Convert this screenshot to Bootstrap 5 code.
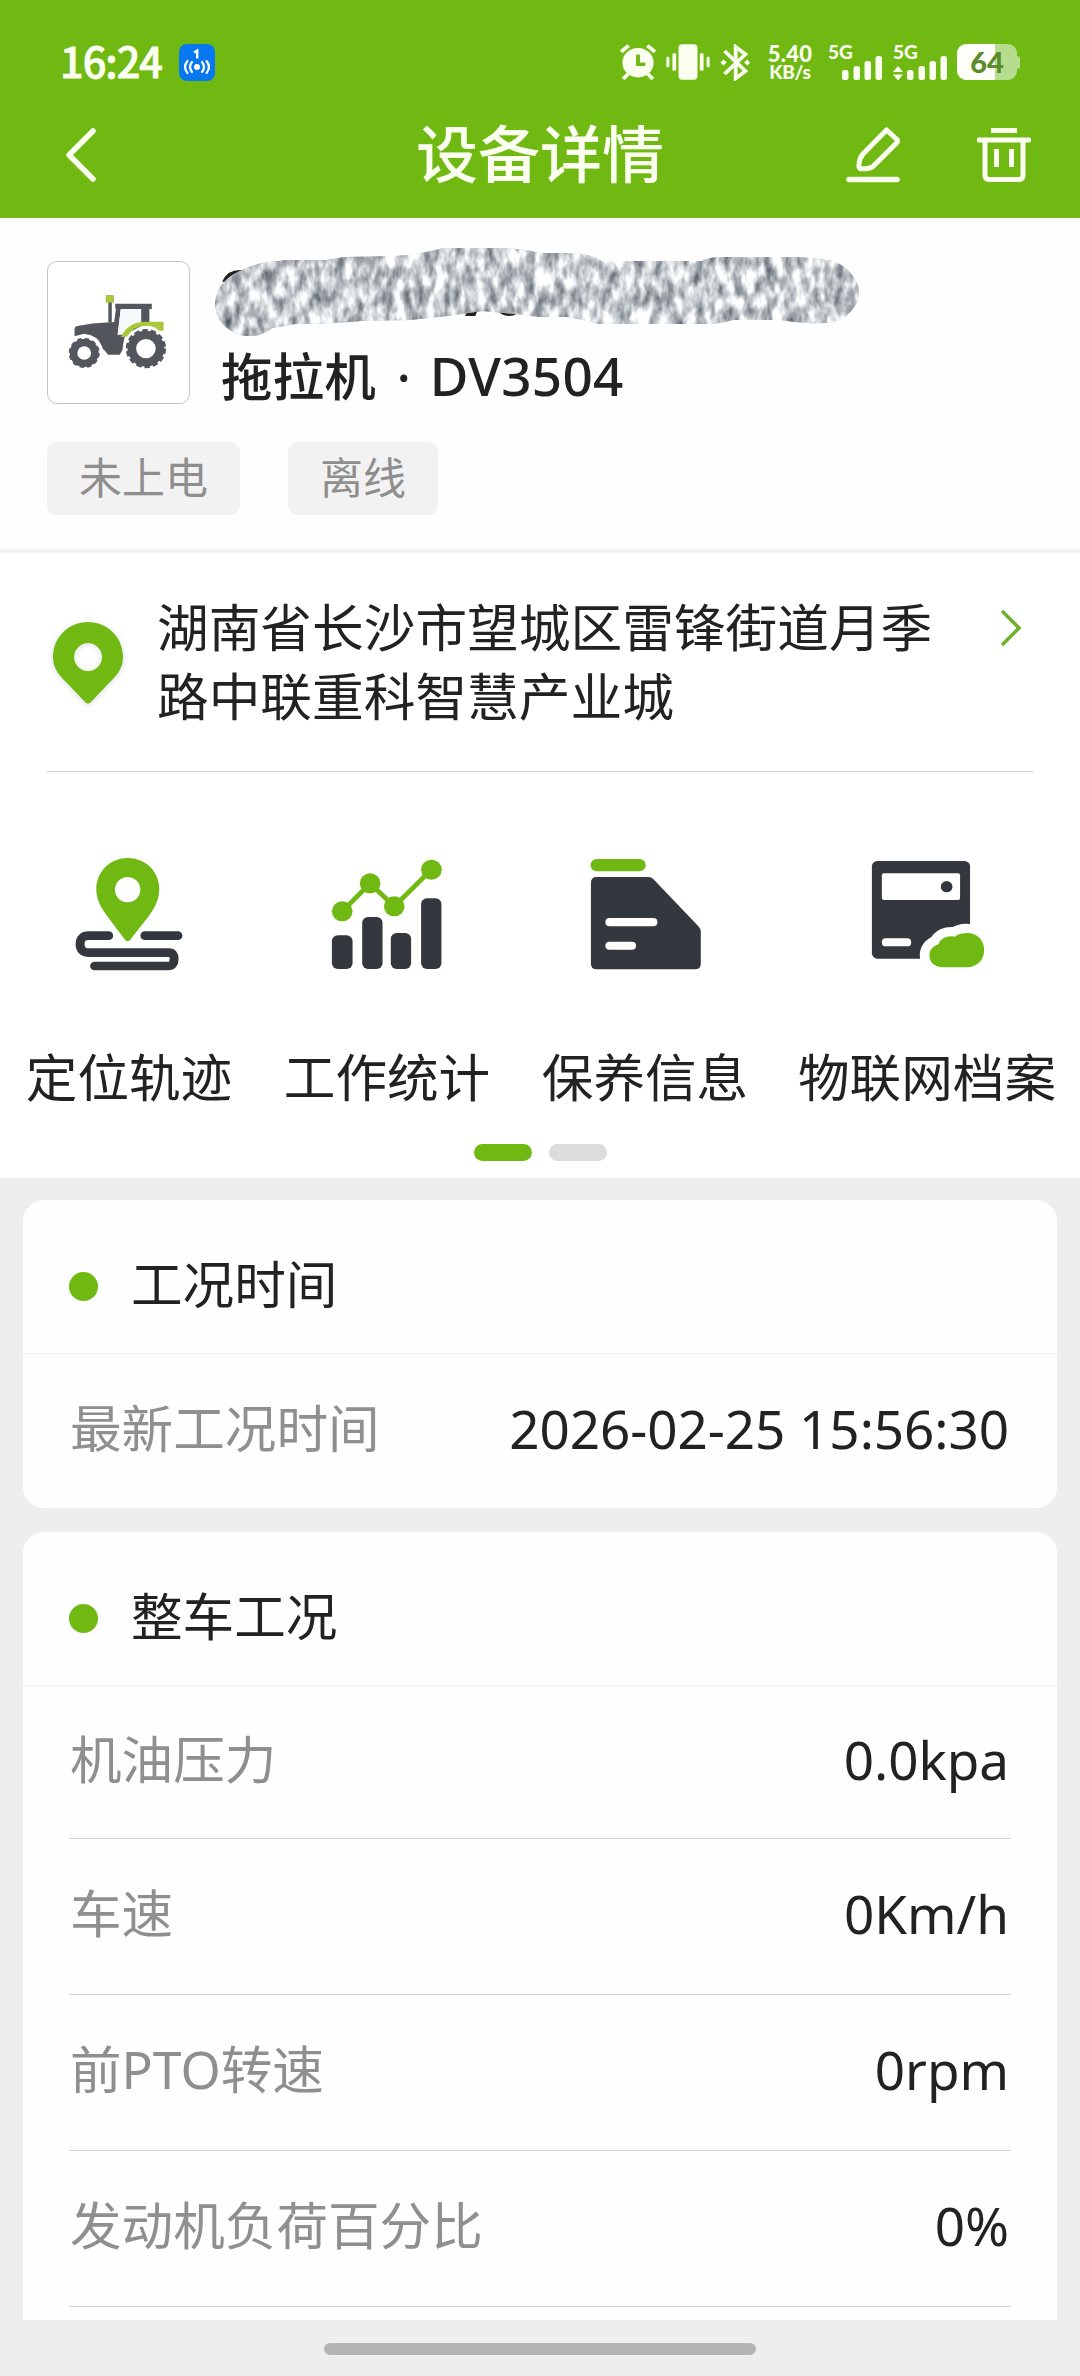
<!DOCTYPE html>
<html lang="zh-CN">
<head>
<meta charset="utf-8">
<meta name="viewport" content="width=device-width, initial-scale=1">
<title>设备详情</title>
<link rel="stylesheet" href="https://cdn.jsdelivr.net/npm/bootstrap@5.3.0/dist/css/bootstrap.min.css">
<style>
:root{--leaf:#70b913;--ink:#222;--soft:#8f8f8f;--slate:#34373d}
body{font-family:"Noto Sans","Noto Sans CJK SC",sans-serif;color:var(--ink);background:#eee;font-size:51.6px;line-height:1.35}
.screen{width:1080px;height:2376px;overflow:hidden}
svg{display:block;flex:none}
.topbar{background:var(--leaf);height:218px;color:#fbfff0}
.statusbar{height:92px;padding:32px 60px 0}
.clock{font:500 41.5px/54px "Noto Sans CJK SC",sans-serif;letter-spacing:-1px;-webkit-text-stroke:.8px;margin-bottom:4px}
.tiny{font-family:Lato,sans-serif;font-weight:900;line-height:1}
.rate{width:46px;font-size:22px;letter-spacing:.2px}
.rate span{display:block;line-height:19px}
.rate span+span{font-size:19px;line-height:17px;letter-spacing:-.2px}
.sig{height:36px;position:relative}
.sig b{font-size:19px;position:absolute;left:-14px;top:-2px}
.batt{width:60px;height:36px;border-radius:9px;background:linear-gradient(90deg,#fdfff8 63%,#b5dd8d 63%);color:#5c8a2c;font-size:29px;line-height:36px;text-align:center}
.nub{width:3px;height:13px;background:#b5dd8d;border-radius:0 3px 3px 0}
.navrow{height:126px;padding:0 49px 0 66px}
.pagename{font-family:"Noto Sans CJK SC",sans-serif;font-weight:500;font-size:62px;line-height:118px;padding-bottom:8px}
.side{width:280px;flex:none}
.thumb{width:143px;height:143px;border:1.5px solid #c4c4c6;border-radius:10px;margin-top:13px;background:#fff}
.device{padding:30px 0 31px 47px;background:#fefefe;height:331px}
.model{height:78px;font-weight:500;line-height:75px;white-space:pre}
.model .cj{font-family:"Noto Sans CJK SC"}
.tagbox{height:73px;border-radius:9px;background:#f2f2f2;color:#8e8e8e;font-size:43px;line-height:71px;padding:0 32px}
.rule-soft{height:4px;background:#f3f3f3}
.addr{height:218px;padding:40px 47px 0 53px}
.addr p{width:790px;line-height:69px;margin:0 0 0 34px;font-size:51.7px}
.thin{height:1px;background:#d4d4d4;margin:0 47px}
.menu{height:406px;padding-top:85px}
.tile{width:258px}
.tile-label{line-height:70px;margin-top:71px;white-space:nowrap}
.pg{width:58px;height:17px;border-radius:9px;background:#dcdcdc}
.panel{width:1034px;border:0;border-radius:21px;background:#fefefe;margin:0 auto}
.panel-top{height:154px;flex:none;padding-left:46px;border-bottom:1px solid #ececec}
.dot{width:29px;height:29px;border-radius:50%;background:var(--leaf);margin-right:33px}
.line-row{height:156px;margin:0 46px;border-bottom:1px solid #d2d2d2;padding:0 2px 5px 1px}
.line-row span:first-child{color:var(--soft)}
.val{font-size:53px;letter-spacing:-.05px}
.home{width:432px;height:12px;border-radius:6px;background:#b5b5b5;margin:23px auto 0}
.feed{height:1142px;flex:none;padding-top:22px}
</style>
</head>
<body>
<div class="screen d-flex flex-column">
  <header class="topbar">
    <div class="statusbar d-flex align-items-center">
      <span class="clock">16:24</span>
      <svg style="margin-left:17px" width="36" height="37" viewBox="0 0 36 37"><rect width="36" height="37" rx="8" fill="#0878f0"/><path d="M15 8.500l3.200-2v8" fill="none" stroke="#fff" stroke-width="2.300"/><circle cx="18" cy="23" r="3" fill="#fff"/><g fill="none" stroke="#fff" stroke-width="2.200" stroke-linecap="round"><path d="M13 18q-4 5 0 10M23 18q4 5 0 10M8.500 17q-5 6 0 12M27.500 17q5 6 0 12"/></g></svg>
      <div class="d-flex ms-auto align-items-center">
        <svg width="36" height="36" viewBox="232 131 104 110" preserveAspectRatio="none"><g stroke="#fbfff0" stroke-width="11" fill="none"><path d="M235 155l22-19M333 155l-22-19M258 220l-17 18M310 220l17 18"/></g><circle cx="284" cy="188" r="45" fill="#fbfff0"/><path d="M284 163v30h21" fill="none" stroke="#70b913" stroke-width="11"/></svg>
        <svg style="margin-left:10px" width="44" height="36" viewBox="365 131 130 110" preserveAspectRatio="none" fill="#fbfff0"><rect x="402" y="132" width="56" height="108" rx="11"/><rect x="384" y="159" width="11" height="54" rx="4"/><rect x="465" y="159" width="11" height="54" rx="4"/><rect x="366" y="170" width="9" height="32" rx="4"/><rect x="485" y="170" width="9" height="32" rx="4"/></svg>
        <svg style="margin-left:10px" width="31" height="37" viewBox="523 130 89 112" preserveAspectRatio="none"><path d="M536 151l60 61-28 22V139l28 22-60 60" fill="none" stroke="#fbfff0" stroke-width="11"/><path d="M524 186l9-9 9 9-9 9zM592 186l9-9 9 9-9 9z" fill="#fbfff0"/></svg>
        <div class="tiny rate text-center" style="margin-left:16px"><span>5.40</span><span>KB/s</span></div>
        <div class="sig tiny" style="margin-left:29px;width:40px"><b>5G</b><svg width="40" height="36" viewBox="14 0 40 36" fill="#fbfff0"><rect x="14" y="26" width="6.500" height="10" rx="2.500"/><rect x="25.500" y="22" width="6.500" height="14" rx="2.500"/><rect x="36.500" y="17" width="6.500" height="19" rx="2.500"/><rect x="47.500" y="12" width="6.500" height="24" rx="2.500"/></svg></div>
        <div class="sig tiny" style="margin-left:25px;width:40px"><b>5G</b><svg style="margin-left:-14px" width="54" height="36" viewBox="0 0 54 36" fill="#fbfff0"><path d="M0 28l5-6 5 6zM0 30.500l5 6 5-6z"/><rect x="14" y="26" width="6.500" height="10" rx="2.500"/><rect x="25.500" y="22" width="6.500" height="14" rx="2.500"/><rect x="36.500" y="17" width="6.500" height="19" rx="2.500"/><rect x="47.500" y="12" width="6.500" height="24" rx="2.500"/></svg></div>
        <div class="batt tiny" style="margin-left:10px">64</div><i class="nub"></i>
      </div>
    </div>
    <nav class="navrow d-flex align-items-center">
      <div class="side"><svg width="30" height="54" viewBox="0 0 30 54"><path d="M27 3L3 27 27 51" fill="none" stroke="#fbfff0" stroke-width="5.500" stroke-linecap="round" stroke-linejoin="round"/></svg></div>
      <div class="flex-fill text-center pagename" style="margin-left:-17px">设备详情</div>
      <div class="side d-flex justify-content-end">
        <svg width="54" height="56" viewBox="0 0 54 56" fill="none" stroke="#fbfff0" stroke-width="5" stroke-linejoin="round"><path d="M40.500 3L51 12.500Q52 14 51 15.500L27 39.500Q24 42 14.500 41.800 12.500 41 13 37 13.500 31 17 27Z"/><path d="M3 52.500H51" stroke-width="5.500" stroke-linecap="round"/></svg>
        <svg style="margin-left:77px" width="54" height="56" viewBox="0 0 54 56" fill="none" stroke="#fbfff0" stroke-width="5"><path d="M14 3.500H40" /><path d="M2 13H52" stroke-linecap="round"/><path d="M8 13V48Q8 52.500 12 52.500H42Q46 52.500 46 48V13"/><path d="M19.500 22V40M34.500 22V40"/></svg>
      </div>
    </nav>
  </header>

  <main class="bg-white">
    <section class="device">
      <div class="d-flex">
        <div class="thumb">
          <svg width="140" height="140" viewBox="141 128 406 417" preserveAspectRatio="none">
            <path d="M309 228h22v20h-5v60h-10v-60h-7z" fill="#54565e"/><rect x="309" y="228" width="22" height="21" fill="#a9c93b"/>
            <path fill="#54565e" fill-rule="evenodd" d="M218 349V328Q218 321 226 319L270 311 333 307 338 268 336 266V252H442V268H435V307L352 350H364Q358 370 357 390L349 404H315L306 392Q298 388 298 380 286 346 245 342ZM352 268L343 345 362 343 411 307V268Z"/>
            <path d="M352 268L343 345 362 343 411 307V268Z" fill="#f7fafb"/>
            <path d="M353 350Q376 305 424 306H476V333H463Q450 318 424 318 390 318 370 351Z" fill="#a9c93b"/>
            <circle cx="246" cy="399" r="31" fill="#fff" stroke="#54565e" stroke-width="22"/><circle cx="246" cy="399" r="42" fill="none" stroke="#54565e" stroke-width="6" stroke-dasharray="13 9"/>
            <circle cx="425" cy="386" r="41" fill="#fff" stroke="#54565e" stroke-width="25"/><circle cx="425" cy="386" r="55" fill="none" stroke="#54565e" stroke-width="7" stroke-dasharray="16 8.700"/>
          </svg>
        </div>
        <div style="margin-left:31px">
          <svg style="margin-left:-6px" width="644" height="88" viewBox="0 0 644 88">
            <defs><filter id="speckle" x="0" y="0" width="100%" height="100%" color-interpolation-filters="sRGB"><feTurbulence type="fractalNoise" baseFrequency="0.1 0.05" numOctaves="3" seed="8"/><feColorMatrix values="1.150 .1 0 0 .15  1.120 .1 0 0 .185  1.060 .1 0 0 .23  0 0 0 0 1"/></filter>
            <clipPath id="smear"><path d="M0 55Q1 45 5 39 12 29 23 24 34 18 47 15L71 12H112L129 9 181 8Q200 7 229 0H267Q300 -1 325 5H360Q375 6 387 13H487Q495 9 504 9H583Q600 10 618 13 631 18 637 27 644 35 644 44 644 54 637 62 630 71 618 74 606 76 594 75 580 75 566 72H518Q505 76 490 76H384Q370 72 353 69H325L301 66 267 63 233 68 195 72 147 73 122 75 81 76 57 80Q50 86 40 88 30 89 23 86 12 82 7 75 0 66 0 55Z"/></clipPath></defs>
            <path d="M9 34Q14 23 27 24M253 66l3-8h6l-3 8zM284 62q9 7 17 2" fill="none" stroke="#222" stroke-width="4"/>
            <g clip-path="url(#smear)"><rect width="644" height="88" fill="#c5cace"/><rect width="644" height="88" filter="url(#speckle)"/></g>
          </svg>
          <div class="model"><span class="cj">拖拉机</span><span style="margin:0 19px 0 21px">·</span><span style="font-size:53px;letter-spacing:.3px">DV3504</span></div>
        </div>
      </div>
      <div class="d-flex" style="gap:48px;margin-top:28px"><div class="tagbox">未上电</div><div class="tagbox">离线</div></div>
    </section>
    <div class="rule-soft"></div>
    <section class="addr d-flex align-items-start">
      <svg style="margin-top:29px;filter:drop-shadow(0 1px 3px #0002)" width="70" height="82" viewBox="0 0 70 82"><path fill="#70b913" fill-rule="evenodd" d="M35 0C54 0 70 15 70 35 70 48 62 55 56 61L38 80Q35 83 32 80L14 61C8 55 0 48 0 35 0 15 16 0 35 0ZM35 21a14 14 0 1 0 .1 0Z"/></svg>
      <p>湖南省长沙市望城区雷锋街道月季路中联重科智慧产业城</p>
      <svg class="ms-auto" style="margin-top:17px;margin-right:11px" width="22" height="36" viewBox="0 0 22 36"><path d="M2 1L19 18 2 35" fill="none" stroke="#70b030" stroke-width="3.500"/></svg>
    </section>
    <div class="thin"></div>
    <section class="menu">
      <div class="d-flex">
        <div class="tile d-flex flex-column align-items-center"><svg width="124" height="114" viewBox="194 110 360 342" preserveAspectRatio="none"><path d="M315 346H258Q232 346 232 371 232 397 258 397H490Q505 397 505 416 505 437 487 437H274M420 346H516" fill="none" stroke="#34373d" stroke-width="26" stroke-linecap="round"/><path fill="#70b913" fill-rule="evenodd" d="M370 113C423 113 462 154 462 207 462 242 444 270 430 289L377 359Q370 367 363 359L312 289C296 266 279 242 279 207 279 154 319 113 370 113ZM370 170a37 38 0 1 0 .1 0Z"/></svg><span class="tile-label">定位轨迹</span></div>
        <div class="tile d-flex flex-column align-items-center"><svg width="124" height="114" viewBox="944 110 360 342" preserveAspectRatio="none"><g fill="#34373d"><rect x="964" y="345" width="60" height="101" rx="17"/><rect x="1052" y="290" width="59" height="156" rx="17"/><rect x="1135" y="338" width="59" height="108" rx="17"/><rect x="1223" y="234" width="59" height="212" rx="17"/></g><path d="M994 273L1075 189 1145 258 1253 148" fill="none" stroke="#70b913" stroke-width="14"/><g fill="#70b913"><circle cx="994" cy="273" r="30"/><circle cx="1075" cy="189" r="30"/><circle cx="1145" cy="258" r="30"/><circle cx="1253" cy="148" r="30"/></g></svg><span class="tile-label">工作统计</span></div>
        <div class="tile d-flex flex-column align-items-center"><svg width="124" height="114" viewBox="125 110 360 342" preserveAspectRatio="none"><rect x="147" y="116" width="160" height="37" rx="18" fill="#70b913"/><path fill="#34373d" d="M165 170H315Q323 170 329 176L460 318Q467 325 467 334V430Q467 447 450 447H165Q148 447 148 430V187Q148 170 165 170Z"/><g fill="#fff"><rect x="190" y="293" width="151" height="25" rx="12"/><rect x="190" y="364" width="89" height="24" rx="12"/></g></svg><span class="tile-label">保养信息</span></div>
        <div class="flex-fill d-flex flex-column align-items-center"><svg width="124" height="114" viewBox="944 110 360 342" preserveAspectRatio="none"><rect x="964" y="122" width="285" height="293" rx="16" fill="#34373d"/><rect x="993" y="159" width="227" height="80" rx="6" fill="#fff"/><circle cx="1181" cy="199" r="17" fill="#34373d"/><rect x="993" y="354" width="85" height="24" rx="11" fill="#fff"/><path d="M1169 441C1145 440 1131 425 1131 405 1131 388 1142 377 1157 372 1164 354 1182 345 1205 349 1216 340 1228 338 1240 338 1270 338 1290 360 1290 389 1290 418 1270 440 1241 441Z" fill="#70b913" stroke="#fefefe" stroke-width="56" paint-order="stroke" stroke-linejoin="round"/></svg><span class="tile-label">物联网档案</span></div>
      </div>
      <div class="d-flex justify-content-center" style="gap:17px;margin-top:32px"><i class="pg" style="background:var(--leaf)"></i><i class="pg"></i></div>
    </section>
  </main>

  <div class="feed overflow-hidden">
    <section class="panel card" style="height:308px;margin-bottom:24px">
      <div class="panel-top d-flex align-items-center"><i class="dot" style="margin-top:20px"></i><span style="margin-top:16px">工况时间</span></div>
      <div class="line-row d-flex align-items-center justify-content-between border-0"><span>最新工况时间</span><span class="val">2026-02-25 15:56:30</span></div>
    </section>
    <section class="panel card">
      <div class="panel-top d-flex align-items-center"><i class="dot" style="margin-top:20px"></i><span style="margin-top:16px">整车工况</span></div>
      <div class="line-row d-flex align-items-center justify-content-between" style="height:153px"><span>机油压力</span><span class="val">0.0kpa</span></div>
      <div class="line-row d-flex align-items-center justify-content-between"><span>车速</span><span class="val">0Km/h</span></div>
      <div class="line-row d-flex align-items-center justify-content-between"><span>前PTO转速</span><span class="val">0rpm</span></div>
      <div class="line-row d-flex align-items-center justify-content-between"><span>发动机负荷百分比</span><span class="val">0%</span></div>
      <div class="line-row"></div>
    </section>
  </div>
  <div class="home"></div>
</div>
<script src="https://cdn.jsdelivr.net/npm/bootstrap@5.3.0/dist/js/bootstrap.bundle.min.js"></script>
</body>
</html>
